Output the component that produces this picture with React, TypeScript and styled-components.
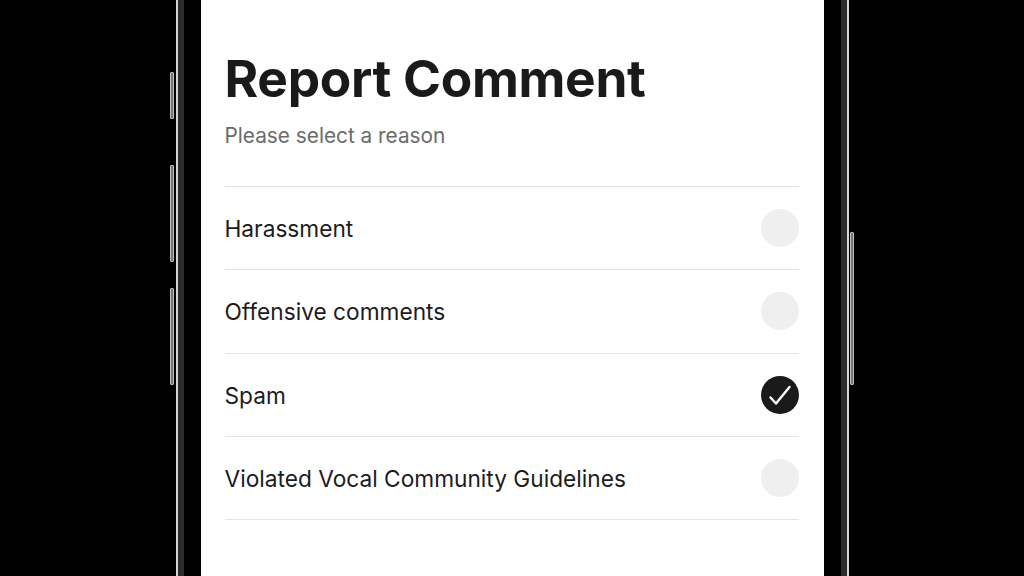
import styled, { createGlobalStyle } from "styled-components";

const GlobalStyle = createGlobalStyle`
  html, body {
    margin: 0;
    padding: 0;
    background: #000;
  }
  body {
    font-family: Inter, "Noto Sans", sans-serif;
  }
`;

const Page = styled.div`
  display: flex;
  justify-content: center;
  height: 576px;
  overflow: hidden;
  background: #000;
`;

const Phone = styled.div`
  position: relative;
  display: flex;
  border-left: 2px solid #d6d6d6;
  border-right: 2px solid #d6d6d6;
`;

const Band = styled.div`
  display: flex;
  border-left: 6px solid #2c2c2c;
  border-right: 6px solid #2c2c2c;
`;

const Bezel = styled.div`
  display: flex;
  padding: 0 17px;
  background: #000;
`;

const SideButton = styled.div<{ $side: "left" | "right"; $top: number; $height: number }>`
  position: absolute;
  top: ${(p) => p.$top}px;
  height: ${(p) => p.$height}px;
  ${(p) => (p.$side === "left" ? "left: -8px;" : "right: -7px;")}
  width: 4px;
  border-radius: 1px;
  background: linear-gradient(90deg, #5a5a5a, #9a9a9a 50%, #4a4a4a);
  border: 1px solid #bdbdbd;
  box-sizing: border-box;
`;

const Screen = styled.div`
  width: 623px;
  background: #fff;
  padding: 46px 25px 0 24px;
  box-sizing: border-box;
`;

const Title = styled.h1`
  margin: 0;
  font-size: 51.4px;
  line-height: 64px;
  font-weight: 700;
  color: #1a1a1a;
  letter-spacing: -0.3px;
`;

const Subtitle = styled.p`
  margin: 12px 0 0;
  font-size: 20.8px;
  line-height: 28px;
  color: #6b6b6b;
`;

const List = styled.div`
  margin-top: 36px;
  border-top: 1px solid #e5e5e5;
`;

const Row = styled.div`
  display: flex;
  align-items: center;
  justify-content: space-between;
  height: 82.3px;
  border-bottom: 1px solid #e5e5e5;
`;

const Label = styled.span`
  font-size: 22.7px;
  font-weight: 400;
  color: #1c1c1c;
  padding-top: 1px;
`;

const Radio = styled.div<{ $checked: boolean }>`
  display: flex;
  align-items: center;
  justify-content: center;
  width: 38px;
  height: 38px;
  border-radius: 50%;
  background: ${(p) => (p.$checked ? "#1a1a1a" : "#efefef")};
`;

const reasons = [
  { label: "Harassment", checked: false },
  { label: "Offensive comments", checked: false },
  { label: "Spam", checked: true },
  { label: "Violated Vocal Community Guidelines", checked: false },
];

const App = () => {
  return (
    <Page>
      <GlobalStyle />
      <Phone>
        <SideButton $side="left" $top={72} $height={47} />
        <SideButton $side="left" $top={165} $height={97} />
        <SideButton $side="left" $top={288} $height={97} />
        <SideButton $side="right" $top={232} $height={153} />
        <Band>
          <Bezel>
            <Screen>
              <Title>Report Comment</Title>
              <Subtitle>Please select a reason</Subtitle>
              <List>
                {reasons.map(({ label, checked }) => (
                  <Row key={label}>
                    <Label>{label}</Label>
                    <Radio $checked={checked}>
                      {checked && (
                        <svg width="38" height="38" viewBox="0 0 38 38">
                          <path
                            d="M9.5 21.5 L15 27.5 L28.5 11"
                            fill="none"
                            stroke="#fff"
                            strokeWidth="2.4"
                            strokeLinecap="round"
                            strokeLinejoin="round"
                          />
                        </svg>
                      )}
                    </Radio>
                  </Row>
                ))}
              </List>
            </Screen>
          </Bezel>
        </Band>
      </Phone>
    </Page>
  );
};

export default App;
